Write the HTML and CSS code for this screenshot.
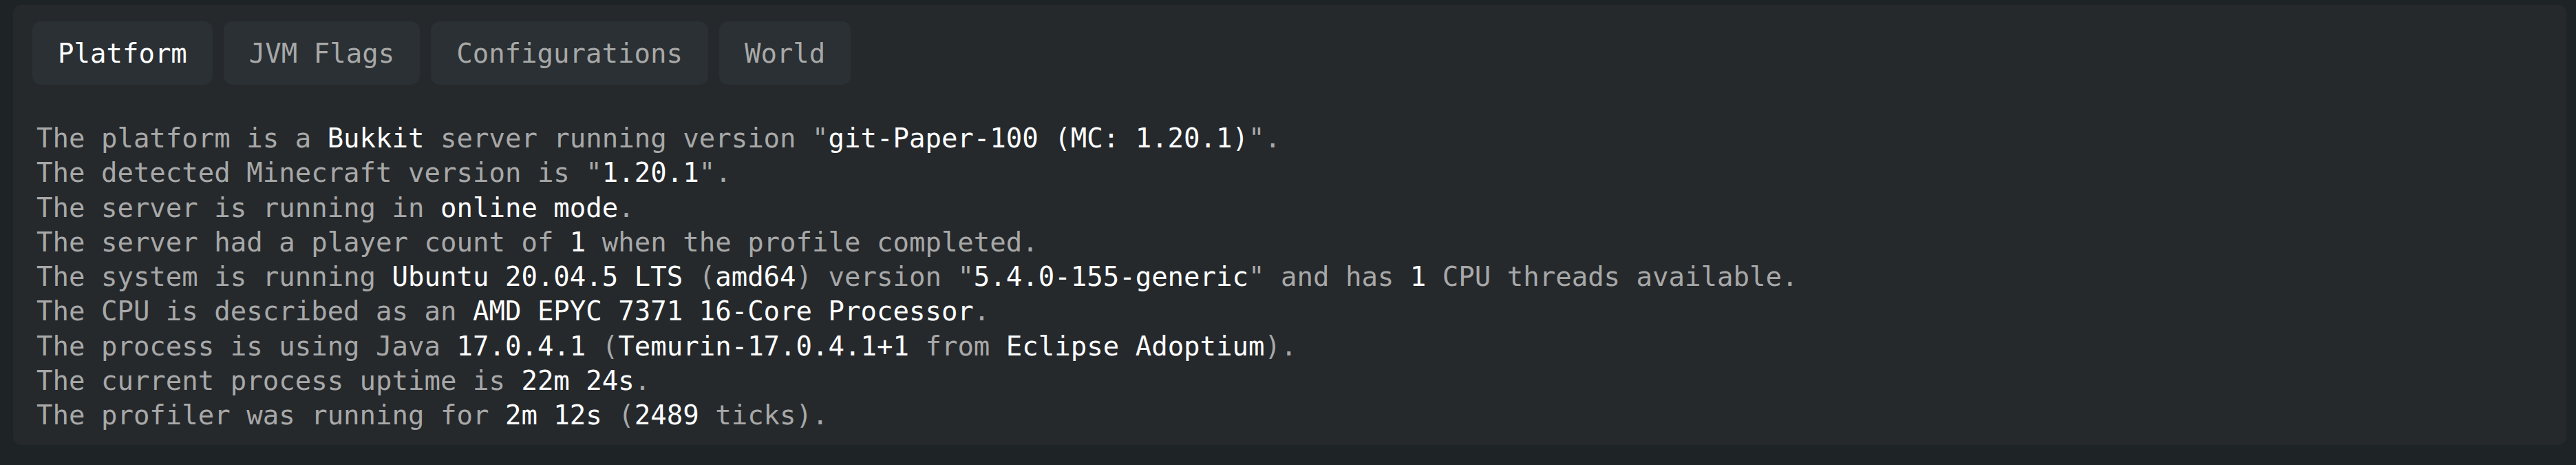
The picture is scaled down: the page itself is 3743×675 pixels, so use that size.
FILE: index.html
```html
<!DOCTYPE html>
<html lang="en">
<head>
<meta charset="utf-8">
<title>Platform</title>
<link rel="stylesheet" href="styles.css">
</head>
<body>
<div class="card">
  <div class="tabs">
    <div class="tab active">Platform</div>
    <div class="tab">JVM Flags</div>
    <div class="tab">Configurations</div>
    <div class="tab">World</div>
  </div>
  <div class="info">
    <p>The platform is a <span class="hl">Bukkit</span> server running version "<span class="hl">git-Paper-100 (MC: 1.20.1)</span>".</p>
    <p>The detected Minecraft version is "<span class="hl">1.20.1</span>".</p>
    <p>The server is running in <span class="hl">online mode</span>.</p>
    <p>The server had a player count of <span class="hl">1</span> when the profile completed.</p>
    <p>The system is running <span class="hl">Ubuntu 20.04.5 LTS</span> (<span class="hl">amd64</span>) version "<span class="hl">5.4.0-155-generic</span>" and has <span class="hl">1</span> CPU threads available.</p>
    <p>The CPU is described as an <span class="hl">AMD EPYC 7371 16-Core Processor</span>.</p>
    <p>The process is using Java <span class="hl">17.0.4.1</span> (<span class="hl">Temurin-17.0.4.1+1</span> from <span class="hl">Eclipse Adoptium</span>).</p>
    <p>The current process uptime is <span class="hl">22m 24s</span>.</p>
    <p>The profiler was running for <span class="hl">2m 12s</span> (<span class="hl">2489</span> ticks).</p>
  </div>
</div>
</body>
</html>
```
FILE: styles.css
```css
html, body {
  margin: 0;
  padding: 0;
  background: #1e2326;
}
body {
  font-family: "DejaVu Sans Mono", "Liberation Mono", monospace;
  font-size: 39px;
  color: #a8a8a8;
}
.card {
  margin: 7px 14px 0 19px;
  padding: 24px 28px 17px 28px;
  background: #25292c;
  border-radius: 12px;
}
.tabs {
  display: flex;
  gap: 16px;
}
.tab {
  height: 92px;
  padding: 0 37px;
  display: flex;
  align-items: center;
  background: #2a3033;
  border-radius: 13px;
  color: #a8a8a8;
  white-space: nowrap;
}
.tab.active {
  color: #ffffff;
}
.info {
  margin-top: 53px;
  padding-left: 6px;
  line-height: 50.3px;
}
.info p {
  margin: 0;
  white-space: pre;
}
.hl {
  color: #ffffff;
}
```
